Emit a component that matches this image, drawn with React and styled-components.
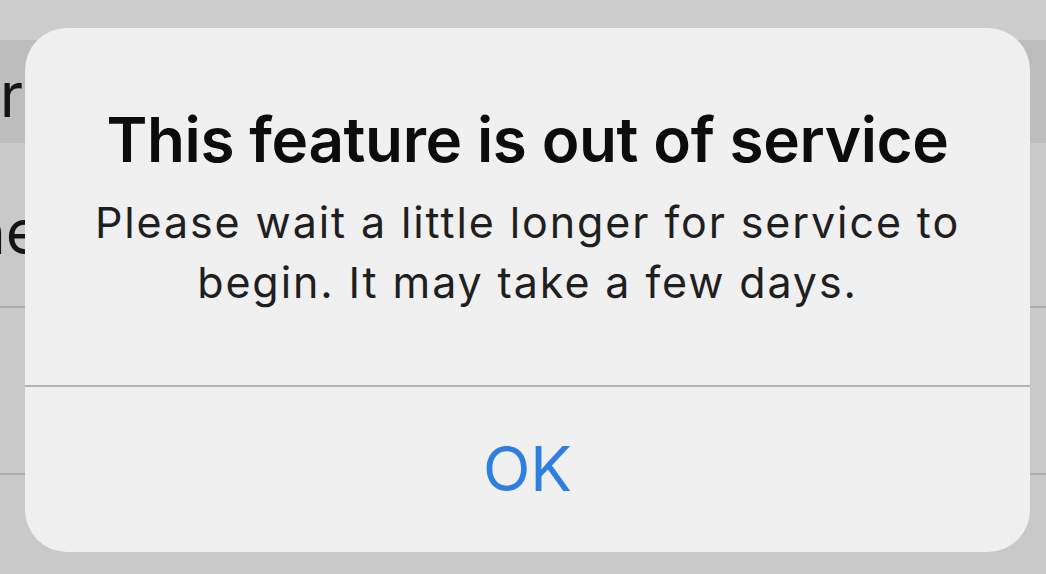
import React from 'react'
import styled, { createGlobalStyle } from 'styled-components'

const GlobalStyle = createGlobalStyle`
  html, body {
    margin: 0;
    padding: 0;
    background: #cdcdcd;
  }
  * { box-sizing: border-box; }
`;

const Screen = styled.div`
  position: relative;
  width: 1046px;
  height: 574px;
  overflow: hidden;
  background: #cdcdcd;
  font-family: Inter, "Liberation Sans", sans-serif;
`;

const List = styled.div`
  display: flex;
  flex-direction: column;
  padding-top: 40px;
`;

const Row = styled.div`
  display: flex;
  align-items: center;
  height: ${(props) => props.height}px;
  background: ${(props) => (props.header ? '#bdbdbd' : '#c9c9c9')};
  border-bottom: ${(props) => (props.divided ? '2px solid #aeaeae' : 'none')};
`;

// only the tail of each label peeks out from under the alert
const RowLabel = styled.div`
  width: ${(props) => props.tail}px;
  margin-top: ${(props) => props.shift || 0}px;
  overflow: hidden;
  display: flex;
  justify-content: flex-end;
  font-size: 62px;
  line-height: 1;
  color: #151515;
  white-space: nowrap;
  & span {
    flex-shrink: 0;
  }
`;

const Overlay = styled.div`
  position: absolute;
  inset: 0;
  display: flex;
  padding: 28px 16px 22px 25px;
`;

const Alert = styled.div`
  flex: 1;
  display: flex;
  flex-direction: column;
  background: #f0f0f0;
  border-radius: 42px;
  overflow: hidden;
`;

const Body = styled.div`
  display: flex;
  flex-direction: column;
  align-items: center;
  padding: 75px 40px 0;
  height: 359px;
  border-bottom: 2px solid #b4b4b4;
  text-align: center;
`;

const Title = styled.div`
  font-size: 62px;
  line-height: 74px;
  font-weight: 600;
  color: #0c0c0c;
  letter-spacing: -0.4px;
`;

const Message = styled.div`
  margin-top: 15px;
  max-width: 880px;
  font-size: 43px;
  line-height: 60px;
  letter-spacing: 1.9px;
  color: #1f1f1f;
`;

const ActionButton = styled.div`
  flex: 1;
  display: flex;
  align-items: center;
  justify-content: center;
  font-size: 62px;
  color: #2f7ee2;
  padding-bottom: 2px;
`;

export default function App() {
  return (
    <>
      <GlobalStyle />
      <Screen>
        <List>
          <Row height={103} header>
            <RowLabel tail={23} shift={6}><span>Other</span></RowLabel>
          </Row>
          <Row height={165} divided>
            <RowLabel tail={42} shift={14}><span>Phone</span></RowLabel>
          </Row>
          <Row height={167} divided />
          <Row height={100} />
        </List>
        <Overlay>
          <Alert>
            <Body>
              <Title>This feature is out of service</Title>
              <Message>
                Please wait a little longer for service to begin. It may take a few days.
              </Message>
            </Body>
            <ActionButton>OK</ActionButton>
          </Alert>
        </Overlay>
      </Screen>
    </>
  )
}
